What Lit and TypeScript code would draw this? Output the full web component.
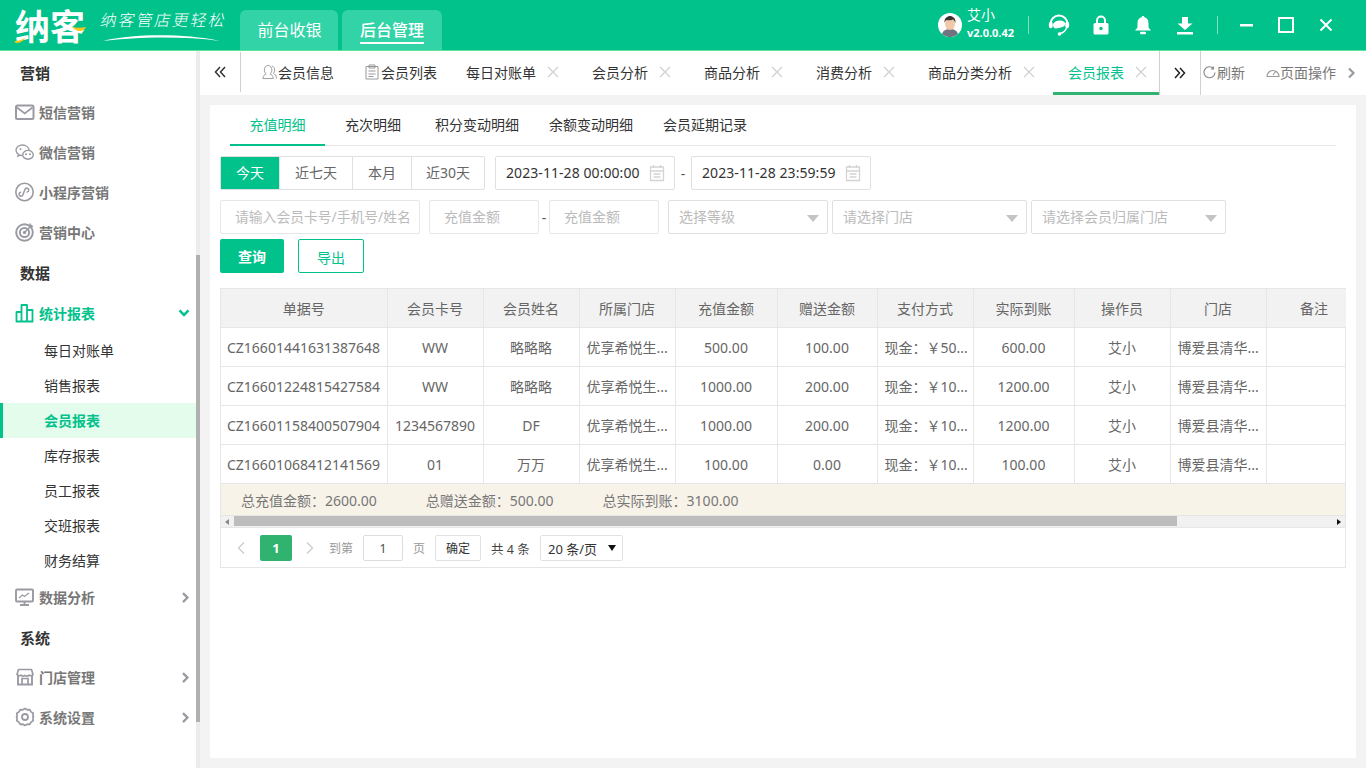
import { LitElement, html, css, svg } from "lit";
import { customElement } from "lit/decorators.js";

const G = "#9a9aa3";
const icons: Record<string, any> = {
  mail: svg`<rect x="1" y="3.500" width="17.500" height="13.500" rx="1.500" fill="none" stroke="${G}" stroke-width="2"/><path d="M2 5.500l7.700 6 7.800-6" fill="none" stroke="${G}" stroke-width="1.700"/>`,
  wechat: svg`<path d="M7.500 13.500c-.9 0-1.800-.1-2.600-.4l-2 1 .6-1.700C2 11.400 1 9.900 1 8.300 1 5.400 4 3 7.500 3s6.200 2.200 6.600 5" fill="none" stroke="${G}" stroke-width="1.400"/><ellipse cx="13" cy="12.800" rx="5.300" ry="4.400" fill="none" stroke="${G}" stroke-width="1.400"/><circle cx="5.500" cy="7" r="1" fill="${G}"/><circle cx="11" cy="12.200" r="1" fill="${G}"/><circle cx="15" cy="12.200" r="1" fill="${G}"/>`,
  mini: svg`<circle cx="9.500" cy="10" r="8.700" fill="none" stroke="${G}" stroke-width="1.600"/><path d="M6 11.500a2 2 0 1 0 3 1.700V7.500a2 2 0 1 1 3 1.700" fill="none" stroke="${G}" stroke-width="1.500" stroke-linecap="round" transform="rotate(20 9.500 10)"/>`,
  target: svg`<circle cx="9.500" cy="10.500" r="8.300" fill="none" stroke="${G}" stroke-width="2"/><circle cx="9.500" cy="10.500" r="4.600" fill="none" stroke="${G}" stroke-width="2"/><circle cx="9.500" cy="10.500" r="1.700" fill="${G}"/><path d="M9.500 10.500L17 3M15 1.500V4.500H18" fill="none" stroke="${G}" stroke-width="1.500"/>`,
  bars: svg`<path d="M1.500 18.500V9h5v9.500M6.500 18.500V2h5.500v16.500M12 18.500V7h5.500v11.500M.7 18.500h17.600" fill="none" stroke="#02c28c" stroke-width="1.800" stroke-linejoin="round"/>`,
  screen: svg`<rect x="1" y="2.500" width="17" height="12" rx="1" fill="none" stroke="${G}" stroke-width="1.900"/><path d="M9.500 14.500v3M5 18h9" stroke="${G}" stroke-width="1.800"/><path d="M4 11l3.500-3 2 1.500L14 6" fill="none" stroke="${G}" stroke-width="1.300"/>`,
  store: svg`<path d="M3 8v9.500h14V8" fill="none" stroke="${G}" stroke-width="1.900"/><path d="M3.500 2.500h13L18 7.500a2.700 2.700 0 0 1-4 .6 3 3 0 0 1-4 .2 3 3 0 0 1-4-.2 2.700 2.700 0 0 1-4-.6z" fill="none" stroke="${G}" stroke-width="1.700" stroke-linejoin="round"/><path d="M7 17.500v-6h6v6" fill="none" stroke="${G}" stroke-width="1.700"/>`,
  gear: svg`<path d="M10 1.500l2.200 1.300 2.600-.2 1.200 2.300 2.200 1.400-.3 2.700.6 1-.6 1 .3 2.700-2.200 1.400-1.200 2.300-2.600-.2L10 18.500 7.800 17.200l-2.600.2L4 15.100l-2.200-1.400.3-2.700-.6-1 .6-1-.3-2.700L4 4.900l1.200-2.300 2.600.2z" fill="none" stroke="${G}" stroke-width="1.700" stroke-linejoin="round"/><circle cx="10" cy="10" r="3" fill="none" stroke="${G}" stroke-width="1.800"/>`,
};

const topTabs = [
  { t: "会员信息", icon: "user" },
  { t: "会员列表", icon: "list" },
  { t: "每日对账单" },
  { t: "会员分析" },
  { t: "商品分析" },
  { t: "消费分析" },
  { t: "商品分类分析" },
  { t: "会员报表", active: true },
];

const nav: any[] = [
  { h: "营销" },
  { i: "mail", t: "短信营销" },
  { i: "wechat", t: "微信营销" },
  { i: "mini", t: "小程序营销" },
  { i: "target", t: "营销中心" },
  { h: "数据" },
  { i: "bars", t: "统计报表", open: true },
  { s: "每日对账单" },
  { s: "销售报表" },
  { s: "会员报表", active: true },
  { s: "库存报表" },
  { s: "员工报表" },
  { s: "交班报表" },
  { s: "财务结算" },
  { i: "screen", t: "数据分析", more: true },
  { h: "系统" },
  { i: "store", t: "门店管理", more: true },
  { i: "gear", t: "系统设置", more: true },
];

const rows = [
  ["CZ16601441631387648", "WW", "略略略", "优享希悦生...", "500.00", "100.00", "现金：￥50...", "600.00", "艾小", "博爱县清华...", ""],
  ["CZ16601224815427584", "WW", "略略略", "优享希悦生...", "1000.00", "200.00", "现金：￥10...", "1200.00", "艾小", "博爱县清华...", ""],
  ["CZ16601158400507904", "1234567890", "DF", "优享希悦生...", "1000.00", "200.00", "现金：￥10...", "1200.00", "艾小", "博爱县清华...", ""],
  ["CZ16601068412141569", "01", "万万", "优享希悦生...", "100.00", "0.00", "现金：￥10...", "100.00", "艾小", "博爱县清华...", ""],
];
const heads = ["单据号", "会员卡号", "会员姓名", "所属门店", "充值金额", "赠送金额", "支付方式", "实际到账", "操作员", "门店", "备注"];
const widths = [166, 96, 96, 96, 102, 100, 96, 101, 96, 96, 96];

const calendar = html`<svg class="cal" width="16" height="18" viewBox="0 0 16 18"><path d="M1.500 3h13v13.500h-13zM1.500 7h13M4.500 1v3M11.500 1v3M4.500 10h7M4.500 13h7" fill="none" stroke="#d4d4d4" stroke-width="1.300"/></svg>`;
const close = html`<svg class="x" width="12" height="12" viewBox="0 0 12 12"><path d="M1 1l10 10M11 1L1 11" stroke="#cfcfcf" stroke-width="1.100"/></svg>`;
const chevR = html`<svg width="9" height="12" viewBox="0 0 9 12"><path d="M2 1.500L6.500 6 2 10.500" fill="none" stroke="#9a9aa3" stroke-width="2.200"/></svg>`;

@customElement("app-root")
export class AppRoot extends LitElement {
  static styles = css`
    :host { display: block; width: 1366px; height: 768px; overflow: hidden; background: #f3f3f3;
      font-family: "Noto Sans", "Noto Sans CJK SC", sans-serif; font-size: 14px; color: #333; }
    * { box-sizing: border-box; }
    .header { height: 51px; background: #02c28c; border-bottom: 1px solid #5fe39b; display: flex; align-items: flex-end; color: #fff; }
    .logo { width: 240px; height: 50px; display: flex; align-items: center; position: relative; flex: none; padding-left: 15px; }
    .logo-main { font-family: "Noto Sans CJK SC", sans-serif; font-weight: 700; font-size: 35px; line-height: 40px; letter-spacing: 0; width: 86px; flex: none; }
    .logo-swoosh { position: absolute; left: 14px; top: 24px; }
    .slogan { font-family: "Noto Sans CJK SC", sans-serif; font-weight: 300; font-size: 16px; letter-spacing: 2px; transform: skewX(-12deg); margin-top: -12px; white-space: nowrap; }
    .slogan-line { position: absolute; left: 102px; top: 33px; }
    .mode { display: flex; gap: 4px; align-items: flex-end; }
    .mode div { height: 40px; background: #33d3a8; border-radius: 6px 6px 0 0; font-size: 16px; display: flex; align-items: center; justify-content: center; }
    .mode .front { width: 98px; padding: 0 0 2px 1px; }
    .mode .back { width: 100px; font-weight: 500; }
    .mode .back span { border-bottom: 2px solid #fff; line-height: 22px; padding-bottom: 1px; margin-top: 2px; }
    .spacer { flex: 1; }
    .hright { height: 50px; display: flex; align-items: center; }
    .avatar { width: 24px; height: 24px; margin-right: 5px; flex: none; }
    .user { width: 61px; display: flex; flex-direction: column; }
    .user .n { font-size: 14px; line-height: 16px; margin-top: -3px; }
    .user .v { font-size: 11px; line-height: 14px; font-weight: 700; margin-top: 3px; white-space: nowrap; }
    .vline { width: 1px; height: 18px; background: #7fe0c4; flex: none; }
    .vline.b { margin-left: 11px; }
    .hicon { width: 42px; display: flex; justify-content: center; flex: none; }
    .hicon.first { margin-left: 9px; }
    .wbtn { width: 40px; display: flex; justify-content: center; flex: none; }
    .wbtn.first { margin-left: 8px; }
    .wbtn.last { margin-right: 20px; }
    .body { display: flex; height: 717px; }
    .side { width: 200px; flex: none; background: #fff; display: flex; position: relative; padding-top: 2px; }
    .menu { width: 196px; display: flex; flex-direction: column; margin-top: -1px; }
    .sbar { position: absolute; right: 0; top: 0; bottom: 0; width: 4px; background: #ececec; }
    .sbar i { position: absolute; left: 0; top: 204px; width: 4px; height: 467px; background: #b0b0b0; display: block; }
    .mh { height: 40px; padding-left: 20px; font-size: 15px; font-weight: 700; color: #333; display: flex; align-items: center; }
    .mi { height: 40px; padding-left: 15px; display: flex; align-items: center; color: #777; font-weight: 700; font-size: 14px; position: relative; }
    .mi svg.ic { margin-right: 4px; flex: none; }
    .mi.open { color: #02c28c; height: 41px; }
    .mi .arr { position: absolute; right: 6px; top: 50%; transform: translateY(-45%); display: flex; }
    .ms { height: 35px; padding: 0 0 2px 44px; display: flex; align-items: center; color: #333; font-size: 14px; }
    .ms + .mi { margin-top: -1px; }
    .ms.active { background: #e3fcec; color: #02c28c; font-weight: 700; border-left: 3px solid #02c28c; padding-left: 41px; }
    .main { flex: 1; min-width: 0; display: flex; flex-direction: column; }
    .topbar { height: 44px; background: #fff; display: flex; flex: none; }
    .tb-btn { width: 41px; border-right: 1px solid #d0d0d0; display: flex; align-items: center; justify-content: center; flex: none; }
    .tb-btn.l { height: 40px; align-self: center; margin-top: -2px; }
    .strip { display: flex; padding-left: 6px; width: 919px; flex: none; border-right: 1px solid #d0d0d0; }
    .tab { display: flex; align-items: center; padding: 1px 12px 0 15px; margin-right: 6px; color: #333; white-space: nowrap; height: 44px; border-bottom: 3px solid transparent; }
    .tab .x { margin-left: 11px; }
    .tab:nth-child(1) { margin-right: 4px; }
    .tab:nth-child(2) { padding-right: 8px; }
    .tab svg.ti { margin-right: 1px; flex: none; }
    .tab svg.ti2 { margin-right: 2px; flex: none; }
    .tab.active { color: #02c28c; border-bottom-color: #2fb36f; margin-right: 0; }
    .tools { display: flex; align-items: center; color: #777; padding: 0 0 2px 2px; white-space: nowrap; position: relative; flex: 1; }
    .tools .ref { display: flex; align-items: center; gap: 1px; width: 63px; }
    .tools .op { display: flex; align-items: center; }
    .tools .go { position: absolute; right: 10px; top: 16px; display: flex; }
    .wrap { flex: 1; padding: 10px; min-height: 0; }
    .card { background: #fff; height: 100%; padding: 0 20px 0 10px; }
    .subtabs { margin-left: 10px; display: flex; height: 41px; border-bottom: 1px solid #e6e6e6; width: 1106px; }
    .st { line-height: 40px; color: #333; white-space: nowrap; height: 41px; }
    .st.on { width: 95px; text-align: center; color: #02c28c; border-bottom: 2px solid #02c28c; margin-right: 20px; }
    .st.m2 { margin-right: 34px; }
    .st.m3 { margin-right: 30px; }
    .frow { display: flex; align-items: center; height: 34px; margin-top: 10px; }
    .seg { display: flex; height: 34px; border: 1px solid #e0e0e0; border-radius: 2px; color: #666; flex: none; }
    .seg div { display: flex; align-items: center; justify-content: center; border-left: 1px solid #e0e0e0; padding-bottom: 2px; }
    .seg div:first-child { border-left: 0; background: #02c28c; color: #fff; }
    .seg .a { width: 58px; } .seg .b { width: 73px; } .seg .c { width: 59px; } .seg .d { width: 73px; }
    .date { width: 180px; height: 34px; border: 1px solid #e0e0e0; border-radius: 2px; margin-left: 10px; display: flex; align-items: center; padding: 0 0 2px 10px; color: #333; font-size: 14px; letter-spacing: .07px; position: relative; white-space: nowrap; }
    .date.two { margin-left: 0; }
    .cal { position: absolute; right: 9px; top: 7px; }
    .dash { width: 16px; text-align: center; color: #555; flex: none; }
    .dash.s { width: 10px; }
    .inp { height: 34px; border: 1px solid #e6e6e6; border-radius: 2px; padding: 0 0 2px 14px; display: flex; align-items: center; color: #bbb; white-space: nowrap; overflow: hidden; flex: none; }
    .i1 { width: 200px; margin-right: 9px; font-size: 13.800px; }
    .i2 { width: 110px; }
    .sel { height: 34px; border: 1px solid #e0e0e0; border-radius: 2px; padding: 0 0 2px 10px; display: flex; align-items: center; color: #bbb; flex: none; position: relative; margin-left: 4px; }
    .sel::after { content: ""; position: absolute; right: 8px; top: 14px; border: 6px solid transparent; border-top: 7px solid #c4c4c4; border-bottom: 0; }
    .sel.lv { width: 160px; margin-left: 9px; }
    .sel.st2 { width: 195px; }
    .btns { display: flex; gap: 14px; margin-top: 5px; height: 34px; }
    .btn { height: 34px; border-radius: 2px; display: flex; align-items: center; justify-content: center; font-size: 14px; }
    .btn.p { width: 64px; background: #02c28c; color: #fff; font-weight: 700; }
    .btn.o { width: 66px; border: 1px solid #02c28c; color: #02c28c; padding-top: 2px; }
    .tablebox { margin-top: 15px; width: 1126px; border: 1px solid #e6e6e6; border-top: 0; }
    .tscroll { overflow: hidden; width: 1125px; }
    table { border-collapse: collapse; table-layout: fixed; width: 1141px; font-size: 14px; color: #666; }
    th { height: 39px; background: #f2f2f2; font-weight: 400; border: 1px solid #e6e6e6; border-left: 0; text-align: center; padding: 0; }
    td { height: 39px; border: 1px solid #e6e6e6; border-left: 0; border-top: 0; text-align: center; padding: 0 6px; white-space: nowrap; overflow: hidden; }
    td.l { text-align: left; padding-left: 7px; }
    td:first-child.l { padding-left: 6px; }
    .sum { height: 32px; background: #f7f3e9; display: flex; align-items: center; padding-left: 20px; color: #777; gap: 49px; border-bottom: 1px solid #e6e6e6; }
    .hs { height: 12px; background: #f1f1f1; position: relative; border-bottom: 1px solid #e6e6e6; }
    .hs i { position: absolute; left: 13px; top: 0; width: 943px; height: 10px; background: #bdbdbd; display: block; }
    .hs::before { content: ""; position: absolute; left: 4px; top: 3px; border: 3px solid transparent; border-right: 4px solid #888; border-left: 0; }
    .hs::after { content: ""; position: absolute; right: 4px; top: 3px; border: 3px solid transparent; border-left: 4px solid #111; border-right: 0; }
    .pager { height: 39px; display: flex; align-items: center; padding: 1px 0 0 15px; font-size: 12px; color: #999; }
    .pnav { width: 12px; display: flex; margin-right: 12px; flex: none; }
    .pnav.next { margin-left: 13px; margin-right: 12px; }
    .pcur { width: 32px; height: 26px; background: #2fb36f; color: #fff; border-radius: 2px; display: flex; align-items: center; justify-content: center; font-weight: 700; font-size: 13px; flex: none; }
    .pinp { width: 40px; height: 26px; border: 1px solid #ddd; border-radius: 2px; display: flex; align-items: center; justify-content: center; color: #555; margin: 0 10px; font-size: 13px; flex: none; }
    .pok { width: 46px; height: 26px; border: 1px solid #e2e2e2; border-radius: 2px; margin-left: 10px; display: flex; align-items: center; justify-content: center; color: #333; flex: none; }
    .ptotal { margin-left: 10px; color: #444; width: 49px; font-size: 12.500px; white-space: nowrap; flex: none; }
    .psel { width: 83px; height: 26px; border: 1px solid #e2e2e2; border-radius: 2px; display: flex; align-items: center; padding-left: 7px; color: #333; font-size: 13px; position: relative; flex: none; white-space: nowrap; }
    .psel::after { content: ""; position: absolute; right: 6px; top: 9px; border: 4px solid transparent; border-top: 6px solid #111; border-bottom: 0; }
  `;

  renderHeader() {
    return html`<div class="header">
      <div class="logo">
        <span class="logo-main">纳客</span>
        <svg class="logo-swoosh" width="72" height="19" viewBox="0 0 72 19"><path d="M1 17c3 0 7-1 10-3-1 2-4 5-8 5-2 0-3-1-2-2zM58 3c4 1 9 1 14 0-1 2-3 4-6 4-3 0-6-2-8-4z" fill="#f5c518"/></svg>
        <span class="slogan">纳客管店更轻松</span>
        <svg class="slogan-line" width="120" height="10" viewBox="0 0 120 10"><path d="M1 8C30 1 80 0 118 8 80 3 35 4 1 8z" fill="#fff"/></svg>
      </div>
      <div class="mode"><div class="front">前台收银</div><div class="back"><span>后台管理</span></div></div>
      <div class="spacer"></div>
      <div class="hright">
        <svg class="avatar" viewBox="0 0 24 24"><circle cx="12" cy="12" r="12" fill="#fff"/><path d="M4 21c1-4 5-5 8-5s7 1 8 5a12 12 0 0 1-16 0z" fill="#6f7580"/><ellipse cx="12" cy="11" rx="5" ry="6" fill="#f2c9a8"/><path d="M6.500 10c-.5-5 3-7 5.500-7s6 2 5.500 7c-1-2-1.500-3-2.500-3.500-2 1-5 1-6.500.5-1 .8-1.500 1.500-2 3z" fill="#3b3430"/></svg>
        <div class="user"><span class="n">艾小</span><span class="v">v2.0.0.42</span></div>
        <div class="vline"></div>
        <div class="hicon first"><svg width="22" height="22" viewBox="0 0 22 22"><path d="M2.500 10a8.500 8.500 0 0 1 17 0" fill="none" stroke="#fff" stroke-width="2"/><path d="M5 10c1.500-2.500 4-3.500 7-3.500 2.500 0 4.500 1 5.500 3l-1 2.500c-2.500 1.500-6 2.500-9.500 2.500C5.500 14 5 12 5 10z" fill="#fff"/><ellipse cx="2.800" cy="11" rx="2" ry="3.300" fill="#fff"/><ellipse cx="19.200" cy="11" rx="2" ry="3.300" fill="#fff"/><path d="M18.500 14c-1 3-3.500 4.800-6.500 5.500" fill="none" stroke="#fff" stroke-width="1.500"/><circle cx="11.500" cy="20" r="1.800" fill="#fff"/></svg></div>
        <div class="hicon"><svg width="16" height="20" viewBox="0 0 16 20"><path d="M4 9V5.500a4 4 0 0 1 8 0V9" fill="none" stroke="#fff" stroke-width="2"/><rect x="0.500" y="8" width="15" height="11.500" rx="1.500" fill="#fff"/><circle cx="8" cy="13.500" r="1.700" fill="#02c28c"/></svg></div>
        <div class="hicon"><svg width="18" height="20" viewBox="0 0 18 20"><path d="M9 1c.8 0 1.300.5 1.400 1.200C13 3 14.500 5 14.500 8v4.500L17 15.500H1l2.500-3V8c0-3 1.500-5 4.100-5.800C7.700 1.500 8.200 1 9 1z" fill="#fff"/><rect x="6" y="16.700" width="6" height="2.500" rx="1.200" fill="#fff"/></svg></div>
        <div class="hicon"><svg width="18" height="19" viewBox="0 0 18 19"><path d="M6 1h6v6.500h4.500L9 14 1.500 7.500H6z" fill="#fff"/><rect x="1" y="16" width="16" height="2.500" fill="#fff"/></svg></div>
        <div class="vline b"></div>
        <div class="wbtn first"><svg width="13" height="3" viewBox="0 0 13 3"><rect width="13" height="2.500" fill="#fff"/></svg></div>
        <div class="wbtn"><svg width="16" height="16" viewBox="0 0 16 16"><rect x="1" y="1" width="14" height="14" fill="none" stroke="#fff" stroke-width="2"/></svg></div>
        <div class="wbtn last"><svg width="14" height="14" viewBox="0 0 14 14"><path d="M1.500 1.500l11 11M12.500 1.500l-11 11" stroke="#fff" stroke-width="2"/></svg></div>
      </div>
    </div>`;
  }

  renderSide() {
    return html`<div class="side"><div class="menu">
      ${nav.map((n) => {
        if (n.h) return html`<div class="mh">${n.h}</div>`;
        if (n.s) return html`<div class="ms ${n.active ? "active" : ""}">${n.s}</div>`;
        return html`<div class="mi ${n.open ? "open" : ""}">
          <svg class="ic" width="20" height="20" viewBox="0 0 20 20">${icons[n.i]}</svg>${n.t}
          ${n.more ? html`<span class="arr">${chevR}</span>` : ""}
          ${n.open ? html`<span class="arr"><svg width="12" height="9" viewBox="0 0 12 9"><path d="M1.500 1.500L6 6l4.500-4.500" fill="none" stroke="#02c28c" stroke-width="2.400"/></svg></span>` : ""}
        </div>`;
      })}
    </div><div class="sbar"><i></i></div></div>`;
  }

  renderTopbar() {
    return html`<div class="topbar">
      <div class="tb-btn l"><svg width="12" height="12" viewBox="0 0 12 12"><path d="M6 1L1.500 6 6 11M11 1L6.500 6l4.500 5" fill="none" stroke="#333" stroke-width="1.500"/></svg></div>
      <div class="strip">
        ${topTabs.map((t) => html`<div class="tab ${t.active ? "active" : ""}">
          ${t.icon === "user" ? html`<svg class="ti" width="15" height="16" viewBox="0 0 16 16"><path d="M1 15c0-3 2-4.500 3.500-5-1.500-1-2-2.500-2-4 0-3 1.700-5 4-5s4 2 4 5c0 1.500-.5 3-2 4 1.500.5 3.500 2 3.500 5z" fill="none" stroke="#999" stroke-width="1"/><path d="M10.500 1.500c2 .5 3 2.500 3 4.500 0 1.300-.4 2.500-1.300 3.500 1.500.7 3 2 3.300 5.500" fill="none" stroke="#999" stroke-width="1"/></svg>` : ""}
          ${t.icon === "list" ? html`<svg class="ti2" width="14" height="16" viewBox="0 0 14 16"><path d="M1 2.500h12v12.500H1zM4 1h6v3H4zM3.500 7h7M3.500 10h7M3.500 12.500h5" fill="none" stroke="#999" stroke-width="1"/></svg>` : ""}
          <span>${t.t}</span>${t.icon ? "" : close}
        </div>`)}
      </div>
      <div class="tb-btn"><svg width="12" height="12" viewBox="0 0 12 12"><path d="M1 1l4.500 5L1 11M6 1l4.500 5L6 11" fill="none" stroke="#222" stroke-width="1.500"/></svg></div>
      <div class="tools">
        <div class="ref"><svg width="13" height="13" viewBox="0 0 13 13"><path d="M10.500 2.500A5.500 5.500 0 1 0 12 6.500M10.500 .5v2.500H8" fill="none" stroke="#888" stroke-width="1.100"/></svg><span>刷新</span></div>
        <div class="op"><svg width="14" height="13" viewBox="0 0 14 13"><path d="M1 10.500a6 6 0 1 1 12 0zM7 9l3-4" fill="none" stroke="#999" stroke-width="1.100"/></svg><span>页面操作</span></div>
        <span class="go">${chevR}</span>
      </div>
    </div>`;
  }

  renderForm() {
    return html`
      <div class="subtabs">
        <div class="st on">充值明细</div><div class="st m2">充次明细</div><div class="st m3">积分变动明细</div><div class="st m3">余额变动明细</div><div class="st">会员延期记录</div>
      </div>
      <div class="frow">
        <div class="seg"><div class="a">今天</div><div class="b">近七天</div><div class="c">本月</div><div class="d">近30天</div></div>
        <div class="date">2023-11-28 00:00:00${calendar}</div>
        <div class="dash">-</div>
        <div class="date two">2023-11-28 23:59:59${calendar}</div>
      </div>
      <div class="frow">
        <div class="inp i1">请输入会员卡号/手机号/姓名</div>
        <div class="inp i2">充值金额</div>
        <div class="dash s">-</div>
        <div class="inp i2">充值金额</div>
        <div class="sel lv">选择等级</div>
        <div class="sel st2">请选择门店</div>
        <div class="sel st2">请选择会员归属门店</div>
      </div>
      <div class="btns"><div class="btn p">查询</div><div class="btn o">导出</div></div>`;
  }

  renderTable() {
    return html`<div class="tablebox">
      <div class="tscroll"><table>
        <colgroup>${widths.map((w) => html`<col style="width:${w}px" />`)}</colgroup>
        <thead><tr>${heads.map((h) => html`<th>${h}</th>`)}</tr></thead>
        <tbody>${rows.map((r) => html`<tr>${r.map((c, i) => html`<td class="${[0, 3, 6, 9].includes(i) ? "l" : ""}">${c}</td>`)}</tr>`)}</tbody>
      </table></div>
      <div class="sum"><span>总充值金额：2600.00</span><span>总赠送金额：500.00</span><span>总实际到账：3100.00</span></div>
      <div class="hs"><i></i></div>
      <div class="pager">
        <span class="pnav"><svg width="10" height="14" viewBox="0 0 10 14"><path d="M8 1.500L2.500 7 8 12.500" fill="none" stroke="#ccc" stroke-width="1.300"/></svg></span>
        <span class="pcur">1</span>
        <span class="pnav next"><svg width="10" height="14" viewBox="0 0 10 14"><path d="M2 1.500L7.500 7 2 12.500" fill="none" stroke="#ccc" stroke-width="1.300"/></svg></span>
        <span>到第</span><span class="pinp">1</span><span>页</span>
        <span class="pok">确定</span><span class="ptotal">共 4 条</span>
        <span class="psel">20 条/页</span>
      </div>
    </div>`;
  }

  render() {
    return html`${this.renderHeader()}
      <div class="body">
        ${this.renderSide()}
        <div class="main">
          ${this.renderTopbar()}
          <div class="wrap"><div class="card">${this.renderForm()}${this.renderTable()}</div></div>
        </div>
      </div>`;
  }
}
